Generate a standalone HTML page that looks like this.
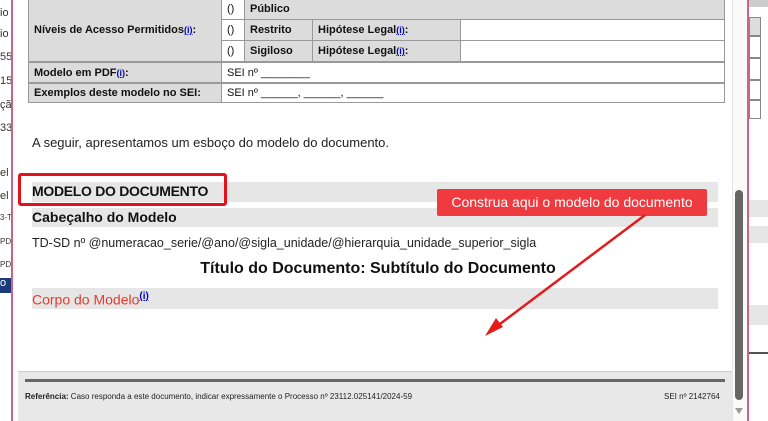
<!DOCTYPE html>
<html><head><meta charset="utf-8"><style>
*{margin:0;padding:0;box-sizing:border-box}
body{width:768px;height:421px;overflow:hidden;background:#fff;font-family:"Liberation Sans",sans-serif;position:relative}
.a{position:absolute}
.c{position:absolute;border:1px solid #999;font-size:11px;font-weight:bold;color:#111;padding-left:5px;display:flex;align-items:center}
.g{background:#dcdcdc}
.w{background:#fff;font-weight:normal}
sup{color:#00c;font-size:9px;font-weight:bold;text-decoration:underline}
.bar{position:absolute;left:32px;width:686px;background:#e6e6e6}
</style></head><body>
<div class="a" style="left:0;top:0;width:12px;height:421px;background:#fff;font-size:11px;color:#333;line-height:1">
<div class="a" style="top:8px">io</div><div class="a" style="top:29px">io</div><div class="a" style="top:52px">55</div><div class="a" style="top:76px">15</div><div class="a" style="top:100px">çã</div><div class="a" style="top:123px">33</div><div class="a" style="top:168px">el</div><div class="a" style="top:191px">el</div>
<div class="a" style="top:214px;font-size:8px">3-T</div><div class="a" style="top:238px;font-size:8px">PD</div><div class="a" style="top:261px;font-size:8px">PD</div>
<div class="a" style="top:278px;width:12px;height:15px;background:#1c3a7a;color:#fff">o</div>
</div>
<div class="a" style="left:11px;top:0;width:2px;height:421px;background:#c9638a"></div>
<div class="a" style="left:749px;top:0;width:19px;height:7px;background:#ccc"></div>
<div class="a" style="left:749px;top:17px;width:12px;height:19px;background:#ddd;border:1px solid #888"></div>
<div class="a" style="left:749px;top:36px;width:12px;height:22px;border:1px solid #888"></div>
<div class="a" style="left:749px;top:58px;width:12px;height:22px;border:1px solid #888"></div>
<div class="a" style="left:749px;top:80px;width:12px;height:20px;border:1px solid #888"></div>
<div class="a" style="left:749px;top:100px;width:12px;height:19px;border:1px solid #888"></div>
<div class="a" style="left:749px;top:200px;width:19px;height:17px;background:#e6e6e6"></div>
<div class="a" style="left:749px;top:226px;width:19px;height:17px;background:#e6e6e6"></div>
<div class="a" style="left:749px;top:305px;width:19px;height:20px;background:#e6e6e6"></div>
<div class="a" style="left:749px;top:352px;width:19px;height:2px;background:#555"></div>
<div class="a" style="left:747px;top:0;width:2px;height:421px;background:#c9638a"></div>
<div class="a" style="left:732px;top:0;width:15px;height:421px;background:#fafafa;border-left:1px solid #e4e4e4"></div>
<div class="a" style="left:735px;top:190px;width:8px;height:210px;background:#666;border-radius:4px"></div>
<div class="a" style="left:735px;top:408px;width:0;height:0;border-left:4px solid transparent;border-right:4px solid transparent;border-top:6px solid #999"></div>
<div class="c g" style="left:28px;top:-2px;width:194px;height:64px">Níveis de Acesso Permitidos<sup>(i)</sup>:</div>
<div class="c w" style="left:221px;top:-2px;width:24px;height:22px">()</div>
<div class="c g" style="left:244px;top:-2px;width:481px;height:22px">Público</div>
<div class="c w" style="left:221px;top:19px;width:24px;height:22px">()</div>
<div class="c g" style="left:244px;top:19px;width:69px;height:22px">Restrito</div>
<div class="c g" style="left:312px;top:19px;width:149px;height:22px">Hipótese Legal<sup>(i)</sup>:</div>
<div class="c w" style="left:460px;top:19px;width:265px;height:22px"></div>
<div class="c w" style="left:221px;top:40px;width:24px;height:22px">()</div>
<div class="c g" style="left:244px;top:40px;width:69px;height:22px">Sigiloso</div>
<div class="c g" style="left:312px;top:40px;width:149px;height:22px">Hipótese Legal<sup>(i)</sup>:</div>
<div class="c w" style="left:460px;top:40px;width:265px;height:22px"></div>
<div class="c g" style="left:28px;top:62px;width:194px;height:21px">Modelo em PDF<sup>(i)</sup>:</div>
<div class="c w" style="left:221px;top:62px;width:504px;height:21px">SEI nº ________</div>
<div class="c g" style="left:28px;top:83px;width:194px;height:20px">Exemplos deste modelo no SEI:</div>
<div class="c w" style="left:221px;top:83px;width:504px;height:20px">SEI nº ______, ______, ______</div>
<div class="a" style="left:32px;top:135px;font-size:13px;color:#222">A seguir, apresentamos um esboço do modelo do documento.</div>
<div class="bar" style="top:182px;height:20px"></div>
<div class="a" style="left:32px;top:183px;font-size:14px;font-weight:bold;color:#111;letter-spacing:-0.3px">MODELO DO DOCUMENTO</div>
<div class="a" style="left:18px;top:173px;width:209px;height:33px;border:3px solid #e4131b;border-radius:3px"></div>
<div class="bar" style="top:208px;height:19px"></div>
<div class="a" style="left:32px;top:209px;font-size:14px;font-weight:bold;color:#111">Cabeçalho do Modelo</div>
<div class="a" style="left:32px;top:236px;font-size:12.5px;color:#222">TD-SD nº @numeracao_serie/@ano/@sigla_unidade/@hierarquia_unidade_superior_sigla</div>
<div class="a" style="left:0;width:756px;top:260px;text-align:center;font-size:16px;font-weight:bold;color:#111">Título do Documento: Subtítulo do Documento</div>
<div class="bar" style="top:288px;height:21px"></div>
<div class="a" style="left:32px;top:291px;font-size:14px;color:#e53a2c">Corpo do Modelo<sup style="font-size:10px">(i)</sup></div>
<div class="a" style="left:18px;top:371px;width:714px;height:50px;background:#e8e8e8;border-top:1px solid #ccc"></div>
<div class="a" style="left:25px;top:379px;width:700px;height:3px;background:#666"></div>
<div class="a" style="left:25px;top:392px;font-size:8px;color:#222"><b>Referência:</b> Caso responda a este documento, indicar expressamente o Processo nº 23112.025141/2024-59</div>
<div class="a" style="left:664px;top:392px;font-size:8px;color:#222">SEI nº 2142764</div>
<div class="a" style="left:437px;top:189px;width:270px;height:27px;background:#ef3b3f;border-radius:2px;color:#fff;font-size:14px;text-align:center;line-height:27px">Construa aqui o modelo do documento</div>
<svg class="a" style="left:0;top:0" width="768" height="421"><line x1="645" y1="215" x2="492" y2="330" stroke="#e41b1b" stroke-width="2.5"/><polygon points="485,336 496,318 503,327" fill="#e41b1b"/></svg>
</body></html>
